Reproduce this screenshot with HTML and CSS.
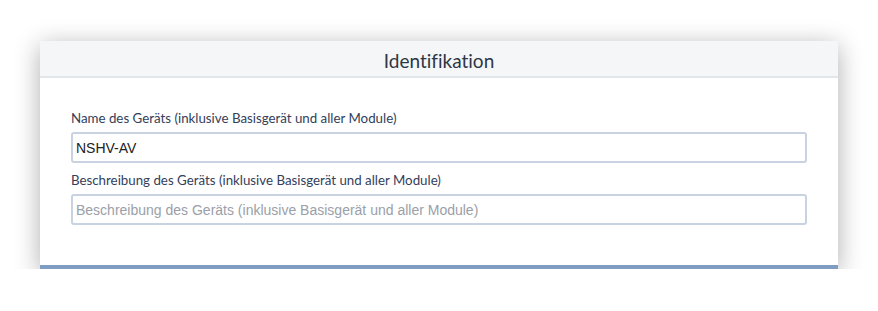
FILE: index.html
```html
<!DOCTYPE html>
<html lang="de">
<head>
<meta charset="utf-8">
<link rel="stylesheet" href="styles.css">
</head>
<body>
<div class="card">
  <div class="card-header">Identifikation</div>
  <div class="card-body">
    <div class="field">
      <label class="label">Name des Geräts (inklusive Basisgerät und aller Module)</label>
      <input class="input" type="text" value="NSHV-AV">
    </div>
    <div class="field">
      <label class="label">Beschreibung des Geräts (inklusive Basisgerät und aller Module)</label>
      <input class="input" type="text" placeholder="Beschreibung des Geräts (inklusive Basisgerät und aller Module)">
    </div>
  </div>
</div>
</body>
</html>
```
FILE: styles.css
```css
html, body {
  margin: 0;
  padding: 0;
  background: #ffffff;
}
body {
  padding: 41px 40px 0 40px;
  width: 798px;
}
.card {
  background: #ffffff;
  box-shadow: 0 5px 24px rgba(0, 0, 0, 0.32);
  border-bottom: 4px solid #7f9cc2;
}
.card-header {
  box-sizing: border-box;
  height: 37px;
  padding-top: 3px;
  background: #f5f6f8;
  border-bottom: 2px solid #e2e5ea;
  display: flex;
  align-items: center;
  justify-content: center;
  font-family: Lato, "Open Sans", sans-serif;
  font-size: 19px;
  color: #2e3645;
  font-variant-ligatures: none;
}
.card-body {
  padding: 32px 31px 40px 31px;
  display: flex;
  flex-direction: column;
  gap: 9px;
}
.field {
  display: flex;
  flex-direction: column;
  gap: 6px;
}
.label {
  font-family: Lato, "Open Sans", sans-serif;
  font-size: 13.3px;
  color: #33405a;
  line-height: 16px;
}
.input {
  box-sizing: border-box;
  height: 31px;
  width: 736px;
  margin: 0;
  border: 2px solid #c8d2e1;
  border-radius: 3px;
  padding: 0 3px;
  font-family: "Liberation Sans", Arial, sans-serif;
  font-size: 14px;
  color: #222222;
  background: #ffffff;
  outline: none;
}
.input::placeholder {
  color: #9aa0a8;
}
```
